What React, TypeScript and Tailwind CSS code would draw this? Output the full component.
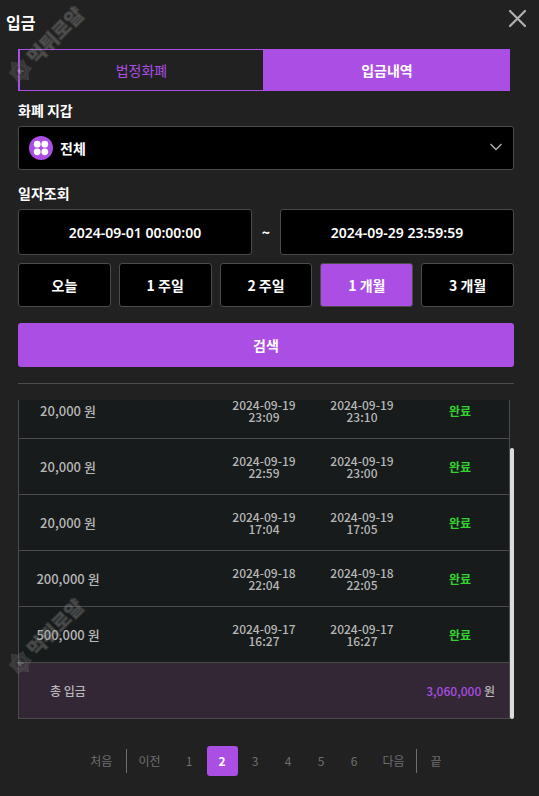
import { useLayoutEffect, useRef, useState } from 'react'

interface Deposit {
  amount: string
  requested: [string, string]
  processed: [string, string]
}

const DEPOSITS: Deposit[] = [
  { amount: '20,000', requested: ['2024-09-19', '23:09'], processed: ['2024-09-19', '23:10'] },
  { amount: '20,000', requested: ['2024-09-19', '22:59'], processed: ['2024-09-19', '23:00'] },
  { amount: '20,000', requested: ['2024-09-19', '17:04'], processed: ['2024-09-19', '17:05'] },
  { amount: '200,000', requested: ['2024-09-18', '22:04'], processed: ['2024-09-18', '22:05'] },
  { amount: '500,000', requested: ['2024-09-17', '16:27'], processed: ['2024-09-17', '16:27'] },
]

const PERIODS = ['오늘', '1 주일', '2 주일', '1 개월', '3 개월']
const PAGES = [1, 2, 3, 4, 5, 6]

export default function App() {
  return (
    <div className="relative min-h-screen overflow-hidden bg-[#212121] text-white font-['Noto_Sans_CJK_KR',sans-serif]">
      <header className="flex h-[49px] items-start justify-between pt-2 pr-3 pl-1.5">
        <h1 className="text-base leading-7 font-bold">입금</h1>
        <button type="button" aria-label="닫기">
          <svg className="size-5" viewBox="0 0 20 20" stroke="#b0b0b0" strokeWidth="2.2" strokeLinecap="round">
            <path d="M3 3l15 15M18 3L3 18" />
          </svg>
        </button>
      </header>

      <main className="pr-[25px] pl-[18px]">
        <Tabs />
        <SearchForm />
        <hr className="mt-4 border-[#4b4b4b]" />
        <DepositTable />
        <Pagination />
      </main>

      <Watermark className="absolute top-0 left-0" />
      <Watermark className="absolute top-[592px] left-0" />
    </div>
  )
}

function Tabs() {
  return (
    <div className="mr-1 grid h-[42px] grid-cols-2 text-sm">
      <button type="button" className="border border-l-2 border-[#ab4ee3] text-[#ab4ee3]">
        법정화폐
      </button>
      <button type="button" className="bg-[#ab4ee3] font-bold">
        입금내역
      </button>
    </div>
  )
}

function SearchForm() {
  const [period, setPeriod] = useState('1 개월')

  return (
    <form onSubmit={(e) => e.preventDefault()} className="text-sm font-bold">
      <label htmlFor="wallet" className="block pt-[9px] pb-1.5 leading-5">
        화폐 지갑
      </label>
      <div className="relative">
        <select
          id="wallet"
          className="block h-11 w-full appearance-none rounded-[3px] border border-[#4b4b4b] bg-black pl-[41px] font-bold"
        >
          <option>전체</option>
        </select>
        <svg className="pointer-events-none absolute top-2.5 left-[11px] size-6" viewBox="0 0 24 24">
          <circle cx="12" cy="12" r="12" fill="#ab4ee3" />
          <g fill="#fff">
            <circle cx="8.2" cy="8.2" r="3.4" />
            <circle cx="15.8" cy="8.2" r="3.4" />
            <circle cx="8.2" cy="15.8" r="3.4" />
            <circle cx="15.8" cy="15.8" r="3.4" />
          </g>
        </svg>
        <svg
          className="pointer-events-none absolute top-[17px] right-3 h-2 w-3"
          viewBox="0 0 12 8"
          fill="none"
          stroke="#b0b0b0"
          strokeWidth="1.4"
        >
          <path d="M.5 1L6 6.5 11.5 1" />
        </svg>
      </div>

      <label htmlFor="date-from" className="block pt-[13px] pb-1.5 leading-5">
        일자조회
      </label>
      <div className="flex items-center">
        <input
          id="date-from"
          defaultValue="2024-09-01 00:00:00"
          className="h-[46px] min-w-0 flex-1 rounded-[3px] border border-[#4b4b4b] bg-black text-center font-['Noto_Sans',sans-serif] font-semibold"
        />
        <span className="w-7 text-center">~</span>
        <input
          aria-label="종료일"
          defaultValue="2024-09-29 23:59:59"
          className="h-[46px] min-w-0 flex-1 rounded-[3px] border border-[#4b4b4b] bg-black text-center font-['Noto_Sans',sans-serif] font-semibold"
        />
      </div>

      <div className="mt-2 grid grid-cols-5 gap-2">
        {PERIODS.map((p) => (
          <button
            key={p}
            type="button"
            onClick={() => setPeriod(p)}
            className={`h-11 rounded-[3px] border border-[#4b4b4b] ${p === period ? 'bg-[#ab4ee3]' : 'bg-black'}`}
          >
            {p}
          </button>
        ))}
      </div>

      <button type="submit" className="mt-4 h-11 w-full rounded-[3px] bg-[#ab4ee3]">
        검색
      </button>
    </form>
  )
}

function DepositTable() {
  const scrollRef = useRef<HTMLDivElement>(null)

  // start at the bottom so the total row is in view
  useLayoutEffect(() => {
    if (scrollRef.current) {
      scrollRef.current.scrollTop = scrollRef.current.scrollHeight
    }
  }, [])

  return (
    <div className="mt-4 flex h-[319px]">
      <div
        ref={scrollRef}
        className="h-full flex-1 overflow-y-auto [scrollbar-width:none]"
      >
        <table className="w-full table-fixed border-separate border-spacing-0 border-x border-[#4b4b4b] text-center text-xs leading-3 font-medium text-[#b8b8b8]">
          <tbody>
            {DEPOSITS.map((d, i) => (
              <tr key={i} className="h-14 bg-[#171b1b]">
                <td className="border-b border-[#4b4b4b] text-[13px]">{d.amount} 원</td>
                <td className="border-b border-[#4b4b4b]" />
                <td className="border-b border-[#4b4b4b]">
                  {d.requested[0]}
                  <br />
                  {d.requested[1]}
                </td>
                <td className="border-b border-[#4b4b4b]">
                  {d.processed[0]}
                  <br />
                  {d.processed[1]}
                </td>
                <td className="border-b border-[#4b4b4b] font-bold text-[#35d32f]">완료</td>
              </tr>
            ))}
            <tr className="h-14 bg-[#332736]">
              <td className="border-b border-[#4b4b4b]">총 입금</td>
              <td colSpan={4} className="border-b border-[#4b4b4b] pr-3.5 text-right">
                <span className="text-[#ab4ee3]">3,060,000</span> 원
              </td>
            </tr>
          </tbody>
        </table>
      </div>
      <div className="h-[271px] w-1 self-end rounded-sm bg-[#dcdcdc]" />
    </div>
  )
}

function Pagination() {
  const [page, setPage] = useState(2)

  return (
    <nav className="mt-[27px] flex h-[30px] items-center justify-center text-xs text-[#6f6f6f]">
      <button type="button" className="h-6 border-r border-[#6f6f6f] px-3.5">처음</button>
      <button type="button" className="h-6 px-[11px]">이전</button>
      <div className="mx-0.5 flex gap-0.5">
        {PAGES.map((n) => (
          <button
            key={n}
            type="button"
            onClick={() => setPage(n)}
            className={`h-[30px] w-[31px] rounded-[3px] ${n === page ? 'bg-[#ab4ee3] font-bold text-white' : ''}`}
          >
            {n}
          </button>
        ))}
      </div>
      <button type="button" className="h-6 border-r border-[#6f6f6f] px-[11px]">다음</button>
      <button type="button" className="h-6 px-3.5">끝</button>
    </nav>
  )
}

function Watermark({ className }: { className: string }) {
  return (
    <svg className={`pointer-events-none size-[90px] overflow-visible ${className}`} viewBox="0 0 90 90" opacity="0.34">
      <g transform="translate(20 71) rotate(-45)">
        <path d="M-9 -6L-4 -7 0 -12 4 -7 10 -6 8 0 10 6 4 7 0 12 -4 7 -9 6 -8 0z" fill="#666" stroke="#777" strokeWidth="1" />
        <circle r="6" fill="#555" stroke="#888" strokeWidth="1" />
        <text y="3" textAnchor="middle" fontSize="8" fontWeight="700" fill="#ddd">K</text>
        <text x="15" y="7" fontSize="19" fontWeight="900" fill="#aaa" stroke="#777" strokeWidth="1">
          먹튀로얄
        </text>
      </g>
    </svg>
  )
}
